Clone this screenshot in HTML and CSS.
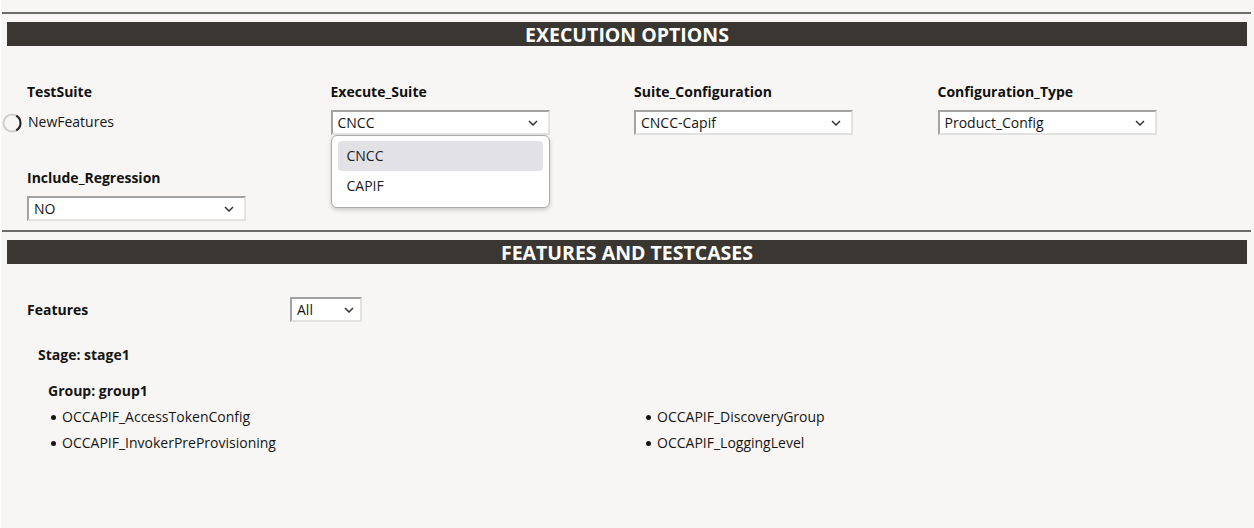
FILE: index.html
```html
<!DOCTYPE html>
<html lang="en">
<head>
<meta charset="utf-8">
<title>Execution Options</title>
<link rel="stylesheet" href="styles.css">
</head>
<body>
<div class="page">
  <div class="rule"></div>
  <div class="bar">EXECUTION OPTIONS</div>

  <div class="fields">
    <div class="field">
      <div class="label">TestSuite</div>
      <div class="value-row">
        <svg class="spinner" width="20" height="20" viewBox="0 0 20 20">
          <circle cx="10" cy="10" r="8.5" fill="none" stroke="#cfcecc" stroke-width="2"/>
          <path d="M14.25 2.64 A8.5 8.5 0 0 1 14.25 17.36" fill="none" stroke="#222" stroke-width="2"/>
        </svg>
        <span class="value-text">NewFeatures</span>
      </div>
    </div>
    <div class="field">
      <div class="label">Execute_Suite</div>
      <div class="select-wrap">
        <div class="select"><span>CNCC</span><svg class="chev" width="10" height="6" viewBox="0 0 10 6"><path d="M1 1 L5 5 L9 1" fill="none" stroke="#333" stroke-width="1.5"/></svg></div>
        <div class="menu">
          <div class="menu-item active">CNCC</div>
          <div class="menu-item">CAPIF</div>
        </div>
      </div>
    </div>
    <div class="field">
      <div class="label">Suite_Configuration</div>
      <div class="select"><span>CNCC-Capif</span><svg class="chev" width="10" height="6" viewBox="0 0 10 6"><path d="M1 1 L5 5 L9 1" fill="none" stroke="#333" stroke-width="1.5"/></svg></div>
    </div>
    <div class="field">
      <div class="label">Configuration_Type</div>
      <div class="select"><span>Product_Config</span><svg class="chev" width="10" height="6" viewBox="0 0 10 6"><path d="M1 1 L5 5 L9 1" fill="none" stroke="#333" stroke-width="1.5"/></svg></div>
    </div>
    <div class="field">
      <div class="label">Include_Regression</div>
      <div class="select"><span>NO</span><svg class="chev" width="10" height="6" viewBox="0 0 10 6"><path d="M1 1 L5 5 L9 1" fill="none" stroke="#333" stroke-width="1.5"/></svg></div>
    </div>
  </div>

  <div class="rule rule-2"></div>
  <div class="bar">FEATURES AND TESTCASES</div>

  <div class="features-row">
    <div class="label features-label">Features</div>
    <div class="select select-small"><span>All</span><svg class="chev" width="10" height="6" viewBox="0 0 10 6"><path d="M1 1 L5 5 L9 1" fill="none" stroke="#333" stroke-width="1.5"/></svg></div>
  </div>

  <div class="stage">Stage: stage1</div>
  <div class="group">
    <div class="group-title">Group: group1</div>
    <ul class="cases">
      <li>OCCAPIF_AccessTokenConfig</li>
      <li>OCCAPIF_DiscoveryGroup</li>
      <li>OCCAPIF_InvokerPreProvisioning</li>
      <li>OCCAPIF_LoggingLevel</li>
    </ul>
  </div>
</div>
</body>
</html>
```

FILE: styles.css
```css
* { box-sizing: border-box; }

html, body {
  margin: 0;
  padding: 0;
}

body {
  background: #f7f6f4;
  border-left: 1px solid #ffffff;
  height: 528px;
  overflow: hidden;
  font-family: "Open Sans", "Noto Sans", sans-serif;
  color: #161513;
  font-size: 14px;
}

.page {
  padding-top: 12px;
}

.rule {
  height: 2px;
  background: #6c6b69;
  margin: 0 3px 0 1px;
}

.bar {
  margin: 8px 7px 0 6px;
  height: 24px;
  background: #3a3631;
  color: #ffffff;
  font-weight: 700;
  font-size: 19.5px;
  line-height: 25px;
  text-align: center;
}

.fields {
  display: grid;
  grid-template-columns: repeat(4, 303.5px);
  row-gap: 33px;
  padding: 36px 0 0 26px;
}

.field {
  display: flex;
  flex-direction: column;
  gap: 8px;
}

.label {
  font-weight: 700;
  font-size: 14px;
  line-height: 20px;
  color: #111;
}

.value-row {
  display: flex;
  align-items: center;
  height: 25px;
}

.spinner {
  margin-left: -25px;
  margin-right: 6px;
  flex: none;
}

.value-text {
  font-size: 14px;
  line-height: 20px;
  margin-top: -2px;
}

.select-wrap {
  position: relative;
}

.select {
  width: 219px;
  height: 25px;
  background: #ffffff;
  border-style: solid;
  border-width: 2px;
  border-color: #a3a3a3 #e2e2e2 #e2e2e2 #a3a3a3;
  display: flex;
  align-items: center;
  justify-content: space-between;
  padding: 0 10px 0 5px;
  font-size: 14px;
  color: #161513;
}

.chev {
  flex: none;
}

.menu {
  position: absolute;
  left: 0;
  top: 25px;
  width: 219px;
  background: #ffffff;
  border: 1px solid #ababab;
  border-radius: 6px;
  box-shadow: 0 2px 4px rgba(0, 0, 0, 0.18);
  padding: 5px 6px 6px 6px;
  z-index: 5;
}

.menu-item {
  height: 30px;
  line-height: 30px;
  padding-left: 9px;
  border-radius: 4px;
  font-size: 14px;
  color: #1c1c1c;
}

.menu-item.active {
  background: #e2e1e6;
}

.rule-2 {
  margin-top: 9px;
}

.features-row {
  display: flex;
  align-items: center;
  padding: 33px 0 0 26px;
}

.features-label {
  width: 263px;
}

.select-small {
  width: 72px;
  padding-right: 6px;
}

.stage {
  font-weight: 700;
  font-size: 14px;
  margin: 23px 0 0 37px;
  line-height: 20px;
}

.group {
  margin: 16px 0 0 47px;
}

.group-title {
  font-weight: 700;
  font-size: 14px;
  line-height: 20px;
}

.cases {
  list-style: none;
  margin: 6px 0 0 0;
  padding: 0;
  display: grid;
  grid-template-columns: 595px 595px;
  row-gap: 6px;
}

.cases li {
  position: relative;
  padding-left: 14px;
  line-height: 20px;
  font-size: 14px;
}

.cases li::before {
  content: "";
  position: absolute;
  left: 3px;
  top: 8px;
  width: 5px;
  height: 5px;
  border-radius: 50%;
  background: #161513;
}
```
